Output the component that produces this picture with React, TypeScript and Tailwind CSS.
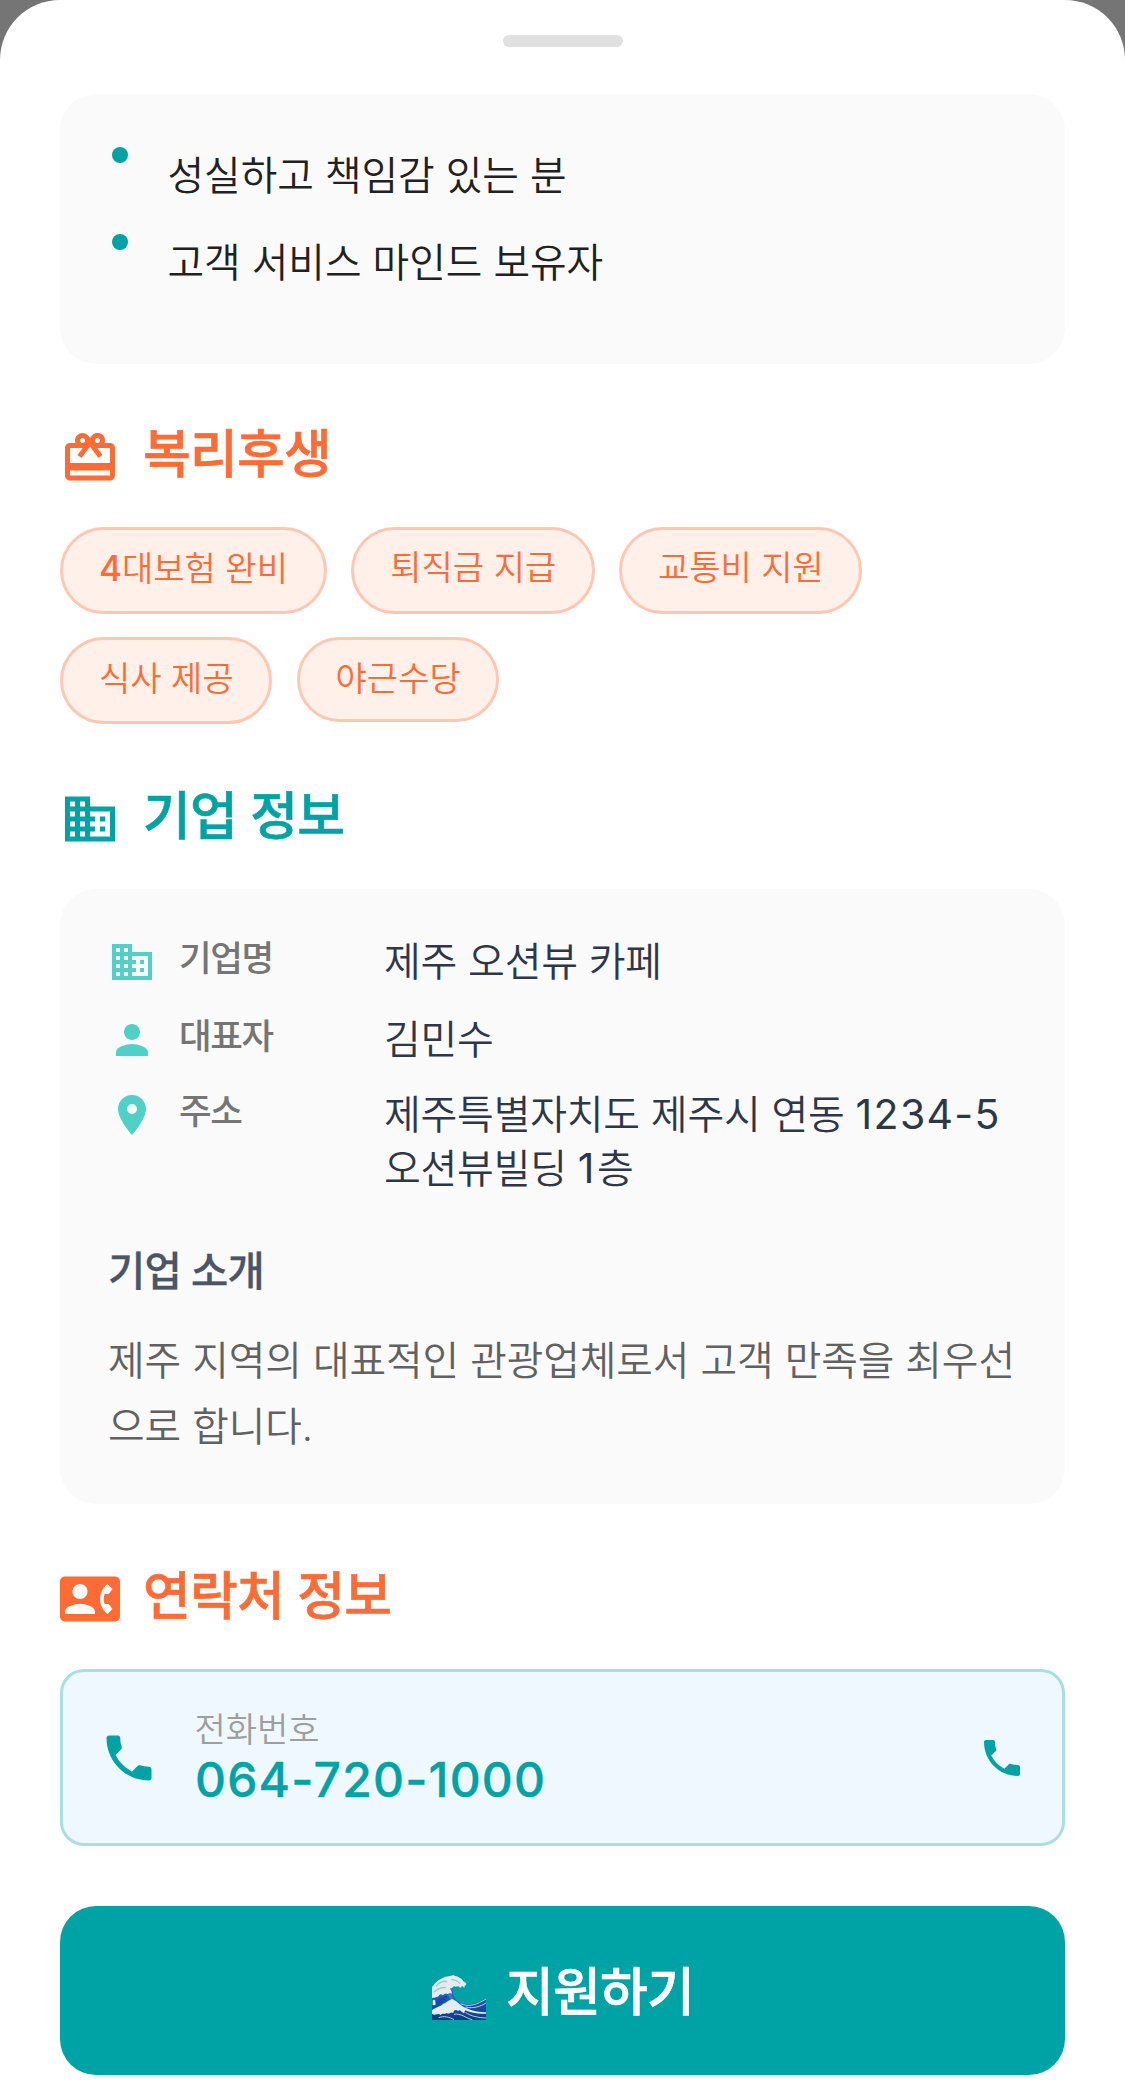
import React from "react";
import type { ReactNode } from "react";
import {
  MdBusiness,
  MdCardGiftcard,
  MdContactPhone,
  MdLocationOn,
  MdPerson,
  MdPhone,
} from "react-icons/md";

function SectionTitle({
  icon,
  children,
  className,
}: {
  icon: ReactNode;
  children: ReactNode;
  className: string;
}) {
  return (
    <h2 className={`flex items-start ${className}`}>
      {icon}
      <span className="ml-[23px] text-[52px] leading-[61px] font-medium tracking-[-0.8px] [-webkit-text-stroke:0.6px_currentColor]">
        {children}
      </span>
    </h2>
  );
}

function Chip({ children, className }: { children: ReactNode; className: string }) {
  return (
    <li
      className={`rounded-full border-[3px] border-[#ffc7b2] bg-[#fff0ea] pt-[14.5px] pl-[36px] text-[34px] leading-[48px] font-[350] whitespace-nowrap text-[#ff6b35] ${className}`}
    >
      {children}
    </li>
  );
}

function InfoRow({
  icon,
  label,
  children,
  className,
}: {
  icon: ReactNode;
  label: string;
  children: ReactNode;
  className: string;
}) {
  return (
    <div className={`flex items-start ${className}`}>
      <span className="mt-[3.5px] text-[#4fd1c7]">{icon}</span>
      <span className="mt-px ml-[23px] w-[205px] shrink-0 text-[35.5px] leading-[48px] font-medium tracking-[-1.4px] text-[#757575]">
        {label}
      </span>
      <span className="mt-px text-[40px] leading-[54px] font-[350] tracking-[-0.25px] whitespace-nowrap text-[#2d3748]">
        {children}
      </span>
    </div>
  );
}

function WaveIcon() {
  return (
    <svg viewBox="0 0 162 135" className="h-[45px] w-[54px]" aria-hidden="true">
      <defs>
        <linearGradient id="sea" x1="0" y1="0" x2="0" y2="1">
          <stop offset="0" stopColor="#3f8fd6" />
          <stop offset="0.55" stopColor="#1d56b4" />
          <stop offset="1" stopColor="#123a80" />
        </linearGradient>
      </defs>
      <path
        d="M0 36C14 18 30 6 50 3C70 0 78 8 66 36C58 54 66 74 84 84C108 94 138 86 162 69V135H0Z"
        fill="url(#sea)"
      />
      <path d="M62 36C54 52 58 68 76 82L58 74L48 62L50 48Z" fill="#2f7fd0" />
      <path
        d="M0 36C8 24 20 14 32 9C44 2 56 5 64 0C70 6 76 2 82 8C90 10 92 18 98 22C103 24 105 28 101 31C98 30 97 33 98 38C93 38 94 33 90 33C87 38 84 40 82 36C78 30 72 38 68 34C62 34 62 42 54 40C56 48 62 50 58 56C52 50 50 60 44 56C38 52 34 64 28 58C20 58 20 68 12 66C8 70 4 66 0 70Z"
        fill="#e2eeee"
      />
      <path
        d="M12 34C22 22 34 16 46 20M6 52C16 42 28 36 42 38M58 14C68 14 78 18 84 26"
        fill="none"
        stroke="#a9c4cf"
        strokeWidth="4"
      />
      <path
        d="M0 106C14 94 24 96 34 86C44 84 50 74 60 72C74 76 84 92 104 100C124 110 144 112 162 112V116C140 118 118 114 100 106C96 110 100 116 94 114C86 108 84 102 78 108C72 102 64 106 64 114C56 108 52 120 44 114C36 120 32 112 26 120C18 112 10 124 0 116Z"
        fill="#e2edf0"
      />
      <path
        d="M86 86C110 98 136 88 162 72M100 96C124 102 146 94 162 84M66 118C86 114 100 128 122 135M100 112C118 124 138 128 162 129M20 128C36 122 52 126 66 134"
        fill="none"
        stroke="#b4cfe4"
        strokeWidth="3"
      />
      <path d="M2 76C6 72 12 76 10 84C14 88 8 92 2 90Z" fill="#dfeaf0" />
      <path d="M14 80C24 66 36 64 46 62C44 74 34 80 20 88Z" fill="#174a9f" />
    </svg>
  );
}

export default function App() {
  return (
    <div className="h-[2100px] w-[1125px] overflow-hidden bg-[#757575] font-['Inter','Noto_Sans_CJK_KR',sans-serif]">
      <main className="flex h-[2100px] flex-col rounded-t-[60px] bg-white px-[60px] pt-[35px]">
        <div className="h-[12px] w-[120px] shrink-0 self-center rounded-full bg-[#e0e0e0]" />

        <ul className="mt-[47px] h-[270px] shrink-0 rounded-[36px] bg-[#fafafa] pt-[53px] pl-[52px]">
          {["성실하고 책임감 있는 분", "고객 서비스 마인드 보유자"].map((item) => (
            <li key={item} className="flex h-[87px] items-start">
              <span className="size-[16px] rounded-full bg-[#00a3a5]" />
              <span className="ml-[39.5px] pt-px text-[39.8px] leading-[56px] font-[350] tracking-[-0.05px] text-[#212121]">
                {item}
              </span>
            </li>
          ))}
        </ul>

        <SectionTitle
          className="mt-[60px] h-[102.5px] shrink-0 text-[#ff6b35]"
          icon={<MdCardGiftcard className="mt-[4px] size-[60px]" />}
        >
          복리후생
        </SectionTitle>

        <ul className="flex shrink-0 flex-wrap items-start gap-x-[24.3px] gap-y-[23.5px]">
          <Chip className="h-[87px] w-[267px]">
            <span className="text-[35px] font-medium">4</span>대보험 완비
          </Chip>
          <Chip className="h-[87px] w-[243.3px]">퇴직금 지급</Chip>
          <Chip className="h-[87px] w-[243.3px]">교통비 지원</Chip>
          <Chip className="h-[87px] w-[212.3px]">식사 제공</Chip>
          <Chip className="h-[85px] w-[202.3px]">야근수당</Chip>
        </ul>

        <SectionTitle
          className="mt-[62px] h-[103px] shrink-0 text-[#00a3a5]"
          icon={<MdBusiness className="mt-[2.7px] size-[60px]" />}
        >
          기업 정보
        </SectionTitle>

        <section className="h-[615px] shrink-0 rounded-[36px] bg-[#fafafa] px-[48px] pt-[45px]">
          <InfoRow className="h-[78px]" label="기업명" icon={<MdBusiness className="size-[48px]" />}>
            제주 오션뷰 카페
          </InfoRow>
          <InfoRow className="h-[75px]" label="대표자" icon={<MdPerson className="size-[48px]" />}>
            김민수
          </InfoRow>
          <InfoRow className="h-[108px]" label="주소" icon={<MdLocationOn className="size-[48px]" />}>
            제주특별자치도 제주시 연동{" "}
            <span className="text-[41px] leading-[53px] font-normal tracking-[1.3px]">1234-5</span>
            <br />
            오션뷰빌딩{" "}
            <span className="text-[41px] leading-[53px] font-normal tracking-[2.5px]">1</span>층
          </InfoRow>
          <h3 className="mt-[50px] text-[40.5px] leading-[54px] font-medium tracking-[-0.8px] text-[#4a5568] [-webkit-text-stroke:0.3px_currentColor]">
            기업 소개
          </h3>
          <p className="mt-[28.5px] text-[39.8px] leading-[66px] font-[350] tracking-[-0.08px] whitespace-nowrap text-[#616161]">
            제주 지역의 대표적인 관광업체로서 고객 만족을 최우선
            <br />
            으로 합니다.
          </p>
        </section>

        <SectionTitle
          className="mt-[62px] h-[103px] shrink-0 text-[#ff6b35]"
          icon={<MdContactPhone className="mt-[2.5px] size-[60px]" />}
        >
          연락처 정보
        </SectionTitle>

        <section className="flex h-[177px] shrink-0 items-center rounded-[24px] border-[3px] border-[#a8dfe2] bg-[#f0f8ff] pr-[36px] pl-[36px]">
          <MdPhone className="size-[60px] text-[#00a3a5]" />
          <div className="ml-[35.5px] flex-1 pb-[3px]">
            <div className="text-[34px] leading-[47px] font-[350] text-[#9e9e9e]">전화번호</div>
            <div className="ml-[0.5px] text-[48px] leading-[54px] font-medium tracking-[1.2px] text-[#00a3a5] [-webkit-text-stroke:0.4px_currentColor]">
              064-720-1000
            </div>
          </div>
          <MdPhone className="size-[48px] text-[#00a3a5]" />
        </section>

        <button
          type="button"
          className="mt-[60px] flex h-[169px] shrink-0 items-start justify-center rounded-[36px] bg-[#00a3a5] pl-px text-white"
        >
          <span className="mt-[69px]">
            <WaveIcon />
          </span>
          <span className="mt-[56px] ml-[20px] text-[52px] leading-[61px] font-medium tracking-[-0.9px] [-webkit-text-stroke:0.6px_currentColor]">
            지원하기
          </span>
        </button>
      </main>
    </div>
  );
}
